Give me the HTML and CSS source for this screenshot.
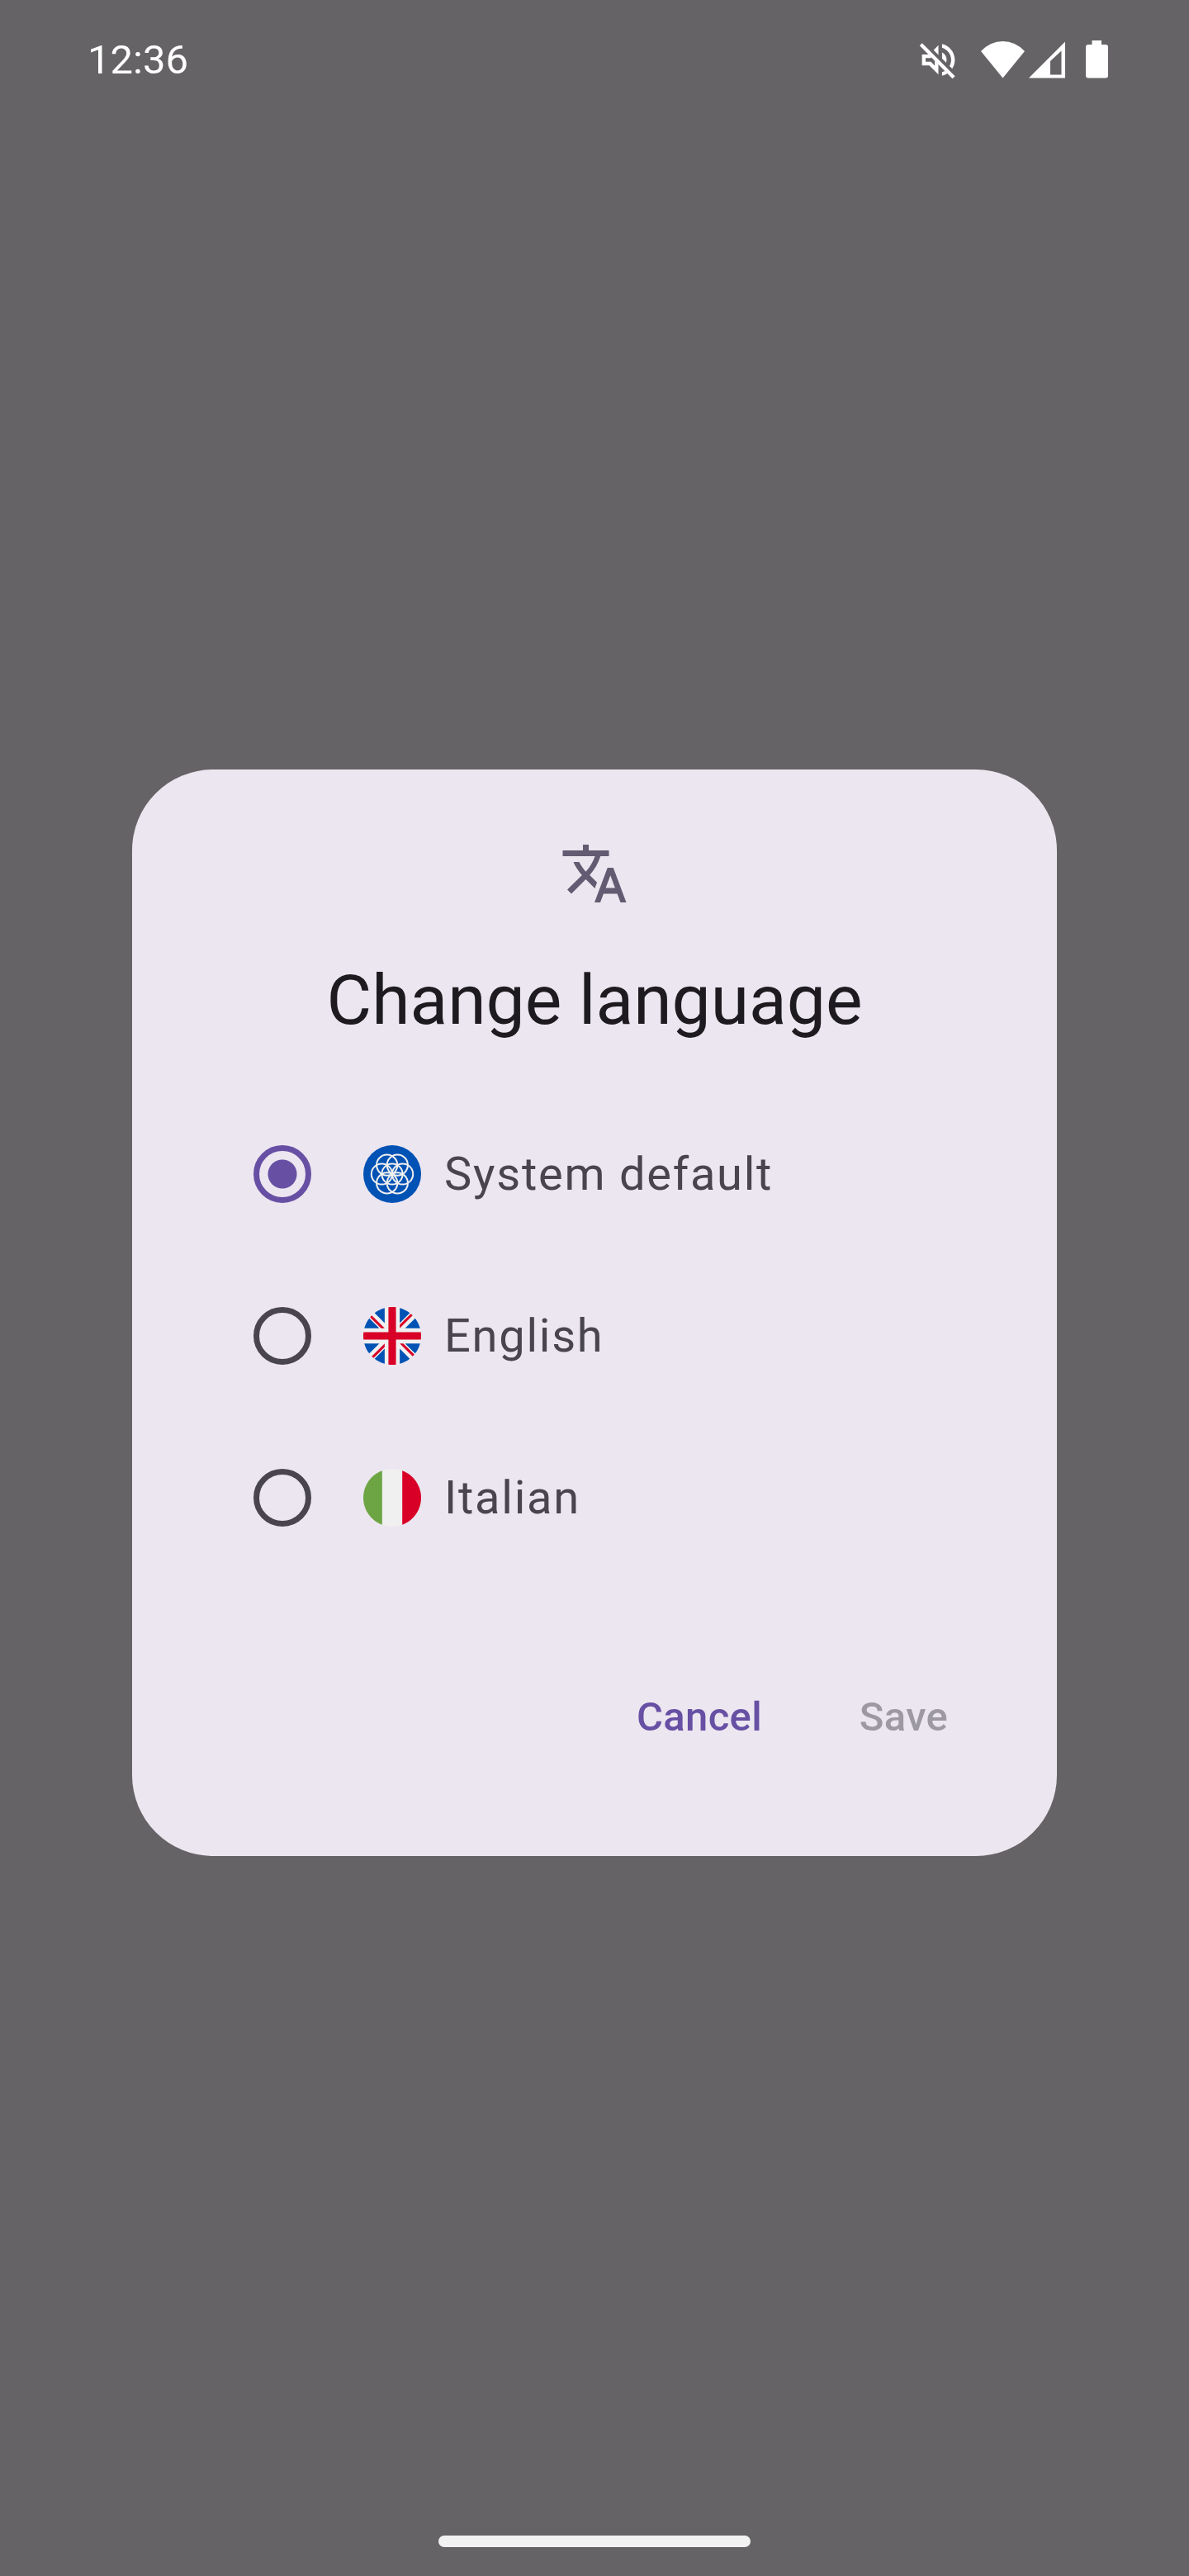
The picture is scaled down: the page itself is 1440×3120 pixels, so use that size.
FILE: index.html
```html
<!DOCTYPE html>
<html lang="en">
<head>
<meta charset="utf-8">
<title>Change language</title>
<link rel="stylesheet" href="styles.css">
</head>
<body>
<div class="screen">
  <header class="status-bar">
    <span class="clock">12:36</span>
    <div class="status-icons">
      <svg class="mute" viewBox="0 0 24 24" width="53" height="53">
        <mask id="slash-gap">
          <rect width="24" height="24" fill="#fff"/>
          <path d="M1.7 4.2V-1L24 21.3V26.5Z" fill="#000"/>
        </mask>
        <g mask="url(#slash-gap)">
          <path d="M3 9v6h4l5 5V4L7 9H3zm7-.17v6.34L7.83 13H5v-2h2.83L10 8.83zM16.5 12c0-1.77-1.02-3.29-2.5-4.03v8.05c1.48-.73 2.5-2.25 2.5-4.02zM14 3.23v2.06c2.89.86 5 3.54 5 6.71s-2.11 5.85-5 6.71v2.06c4.01-.91 7-4.49 7-8.77s-2.99-7.86-7-8.77z"/>
        </g>
        <path d="M1.7 4.2L3.1 2.8L21.1 20.9L19.7 22.3Z"/>
      </svg>
      <svg class="wifi" viewBox="0 0 53 53" width="53" height="53">
        <path d="M0 16Q11.500 4 26.500 4T53 16L26.500 48.500Z"/>
      </svg>
      <svg class="signal" viewBox="0 0 45 53" width="45" height="53">
        <path fill-rule="evenodd" d="M0 48.500L44 4.500V48.500ZM26 28V44.500H39.500V15.500Z"/>
      </svg>
      <svg class="battery" viewBox="0 0 27 53" width="27" height="53">
        <path d="M7.500 3H19V8H24Q27 8 27 11V45.500Q27 48.500 24 48.500H3Q0 48.500 0 45.500V11Q0 8 3 8H7.500Z"/>
      </svg>
    </div>
  </header>

  <main class="stage">
    <section class="dialog">
      <svg class="translate" viewBox="0 0 24 24" width="84" height="84">
        <path d="M12.870 15.070l-2.540-2.510.030-.030c1.740-1.940 2.980-4.170 3.710-6.530H17V4h-7V2H8v2H1v1.990h11.170C11.500 7.920 10.440 9.750 9 11.350 8.070 10.320 7.300 9.190 6.690 8h-2c.730 1.630 1.730 3.170 2.980 4.560l-5.090 5.020L4 19l5-5 3.110 3.110.760-2.040zM18.500 10h-2L12 22h2l1.120-3h4.750L21 22h2l-4.500-12zm-2.620 7l1.620-4.330L19.120 17h-3.240z"/>
      </svg>
      <h1 class="title">Change language</h1>
      <div class="options">
        <label class="option">
          <span class="radio radio-on"></span>
          <svg class="flag" viewBox="0 0 70 70" width="70" height="70">
            <circle cx="35" cy="35" r="35" fill="#0052b4"/>
            <g fill="none" stroke="#f0f0f0" stroke-width="2">
              <circle cx="35" cy="35" r="12.600"/>
              <circle cx="47.600" cy="35" r="12.600"/>
              <circle cx="22.400" cy="35" r="12.600"/>
              <circle cx="41.300" cy="24.100" r="12.600"/>
              <circle cx="28.700" cy="24.100" r="12.600"/>
              <circle cx="41.300" cy="45.900" r="12.600"/>
              <circle cx="28.700" cy="45.900" r="12.600"/>
            </g>
          </svg>
          <span class="label">System default</span>
        </label>
        <label class="option">
          <span class="radio"></span>
          <svg class="flag" viewBox="0 0 512 512" width="70" height="70">
            <circle cx="256" cy="256" r="256" fill="#f0f0f0"/>
            <path fill="#0052b4" d="M52.920 100.142c-20.109 26.163-35.272 56.318-44.101 89.077h133.178zM503.181 189.219c-8.829-32.758-23.993-62.913-44.101-89.076l-89.075 89.076zM8.819 322.784c8.830 32.758 23.993 62.913 44.101 89.075l89.074-89.075zM411.858 52.921c-26.163-20.109-56.317-35.272-89.076-44.102v133.177zM100.142 459.079c26.163 20.109 56.318 35.272 89.076 44.102V370.005zM189.217 8.819c-32.758 8.830-62.913 23.993-89.075 44.101l89.075 89.075zM322.783 503.181c32.758-8.830 62.913-23.993 89.075-44.101l-89.075-89.075zM370.005 322.784l89.075 89.076c20.108-26.162 35.272-56.318 44.101-89.076z"/>
            <path fill="#d80027" d="M509.833 222.609H289.392V2.167C278.461.744 267.317 0 256 0c-11.319 0-22.461.744-33.391 2.167v220.441H2.167C.744 233.539 0 244.683 0 256c0 11.319.744 22.461 2.167 33.391h220.441v220.442C233.539 511.256 244.681 512 256 512c11.317 0 22.461-.743 33.391-2.167V289.392h220.442C511.256 278.461 512 267.319 512 256c0-11.317-.744-22.461-2.167-33.391zM322.783 322.784L437.019 437.020c5.254-5.252 10.266-10.743 15.048-16.435l-97.802-97.802zM189.217 322.784L74.980 437.019c5.252 5.254 10.743 10.266 16.435 15.048l97.802-97.804zM189.217 189.219L74.981 74.980c-5.254 5.252-10.266 10.743-15.048 16.435l97.803 97.803zM322.783 189.219L437.020 74.981c-5.252-5.254-10.743-10.266-16.435-15.047l-97.802 97.803z"/>
          </svg>
          <span class="label">English</span>
        </label>
        <label class="option">
          <span class="radio"></span>
          <svg class="flag" viewBox="0 0 512 512" width="70" height="70">
            <circle cx="256" cy="256" r="256" fill="#f0f0f0"/>
            <path fill="#d80027" d="M512 256c0-110.071-69.472-203.906-166.957-240.077v480.155C442.528 459.906 512 366.071 512 256z"/>
            <path fill="#6da544" d="M0 256c0 110.071 69.472 203.906 166.957 240.077V15.923C69.472 52.094 0 145.929 0 256z"/>
          </svg>
          <span class="label">Italian</span>
        </label>
      </div>
      <div class="actions">
        <button class="button" type="button">Cancel</button>
        <button class="button button-disabled" type="button" disabled>Save</button>
      </div>
    </section>
  </main>

  <footer class="nav-bar"><div class="handle"></div></footer>
</div>
</body>
</html>
```
FILE: styles.css
```css
* {
  box-sizing: border-box;
}

body {
  margin: 0;
  font-family: Roboto, "Liberation Sans", sans-serif;
  background: #666366;
}

svg {
  display: block;
  flex: none;
}

.screen {
  width: 1440px;
  height: 3120px;
  display: flex;
  flex-direction: column;
}

.status-bar {
  height: 145px;
  padding: 0 98px 0 106px;
  display: flex;
  align-items: center;
  justify-content: space-between;
  color: #fff;
}

.clock {
  font-size: 49px;
  line-height: 58px;
}

.status-icons {
  display: flex;
  align-items: center;
  fill: #fff;
}

.mute {
  margin-right: 25px;
}

.wifi {
  margin-right: 5px;
}

.signal {
  margin-right: 24px;
}

.stage {
  flex: 1;
  padding-top: 787px;
  display: flex;
  justify-content: center;
  align-items: flex-start;
}

.dialog {
  width: 1120px;
  height: 1316px;
  padding: 84px;
  border-radius: 98px;
  background: #ece6f0;
  display: flex;
  flex-direction: column;
}

.translate {
  align-self: center;
  fill: #625b71;
}

.title {
  margin: 56px 0;
  font-size: 84px;
  line-height: 112px;
  font-weight: 400;
  text-align: center;
  color: #1d1b20;
}

.option {
  height: 196px;
  padding-left: 63px;
  display: flex;
  align-items: center;
}

.radio {
  width: 70px;
  height: 70px;
  border: 7px solid #49454f;
  border-radius: 50%;
}

.radio-on {
  border-color: #6750a4;
  background: radial-gradient(circle, #6750a4 17px, transparent 18px);
}

.flag {
  margin: 0 28px 0 63px;
}

.label {
  font-size: 56px;
  line-height: 84px;
  letter-spacing: 1.75px;
  color: #49454f;
}

.actions {
  height: 168px;
  margin-top: 84px;
  display: flex;
  justify-content: flex-end;
  align-items: center;
  gap: 28px;
}

.button {
  min-width: 203px;
  height: 140px;
  padding: 0 42px;
  border: 0;
  background: none;
  font: 500 49px/70px Roboto, "Liberation Sans", sans-serif;
  letter-spacing: 0.35px;
  color: #6750a4;
}

.button-disabled {
  color: #9d99a1;
}

.nav-bar {
  height: 84px;
  padding-top: 35px;
  display: flex;
  justify-content: center;
}

.handle {
  width: 378px;
  height: 14px;
  border-radius: 7px;
  background: #f2f2f2;
}
```
